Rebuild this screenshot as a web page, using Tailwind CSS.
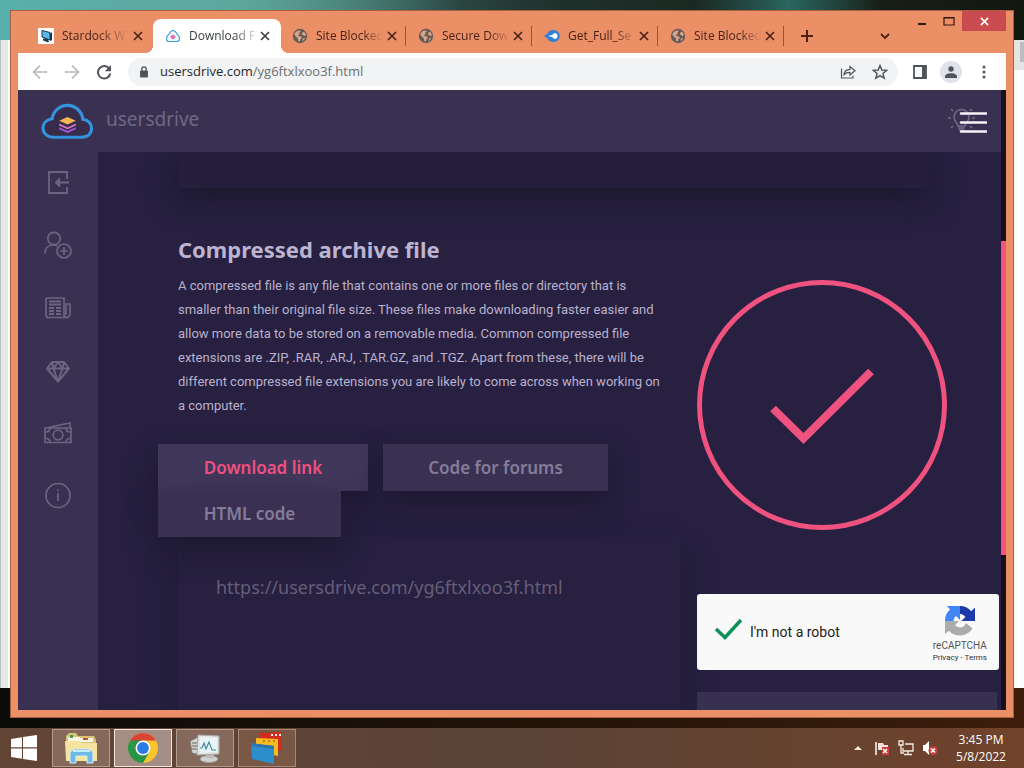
<!DOCTYPE html>
<html lang="en">
<head>
<meta charset="utf-8">
<meta name="viewport" content="width=device-width, initial-scale=1">
<title>Download File</title>
<script src="https://cdn.jsdelivr.net/npm/@tailwindcss/browser@4"></script>
</head>
<body class="h-screen overflow-hidden bg-[#1c0d04] font-['Noto_Sans','Open_Sans',sans-serif]">
<svg class="hidden" aria-hidden="true">
  <symbol id="globe" viewBox="0 0 16 16"><circle cx="8" cy="8" r="7.2" fill="#665c57"/><path d="M2.2 6.500c1-2.600 3-3.900 5.500-4.200l1 1.300-1.600 1.300.4 1.500-2 .9 1.800.9 1.900.3.6 1.600-1.600 1.400-.5 2.300-1.600-1-.3-2.500-1.700-1.500zM10.500 4.200l1.700-.5 1.700 2.700-.9 1.900-1.900-1.200-1.300-.3zM11 10.500l2-.8-.9 2.300-1.700 1z" fill="#d9a489"/></symbol>
  <symbol id="close" viewBox="0 0 10 10"><path d="M1 1l8 8M9 1L1 9" stroke="currentColor" stroke-width="1.700" fill="none"/></symbol>
</svg>
<div class="flex h-full flex-col">
  <!-- Desktop with the windows behind the browser -->
  <div class="relative min-h-0 flex-1 overflow-hidden bg-linear-to-r from-[#0b0c07] via-[#211208] to-[#3d1e0b]">
    <div class="absolute inset-x-0 top-0 h-10 bg-linear-to-r from-[#62b3ad] via-[#1f302b] via-55% to-[#14170e]"></div>
    <div class="absolute top-0 left-0 h-10 w-[45%] bg-linear-to-r from-[#58afab] via-[#5ea89e] to-[#2f5853]/0"></div>
    <div class="absolute top-0 left-[68%] h-3 w-[18%] bg-linear-to-r from-transparent via-[#2a6660] to-transparent"></div>
    <div class="absolute inset-x-0 top-10 bottom-10 border-l border-[#b9bdcc] bg-[#e6e9df]"></div>
    <div class="absolute top-10 bottom-10 left-2 w-1 bg-white"></div>
    <div class="absolute top-10 right-0 bottom-10 w-3 bg-white">
      <div class="h-[30px] bg-[#e4e4e4] pt-0.5 pl-2"><div class="h-5 bg-[#bdbdbd]"></div></div>
    </div>

    <!-- Browser window -->
    <section class="absolute inset-[10px] flex flex-col border border-[#a85f42] bg-[#eb8f67] px-[7px] pb-[7px]">
      <div class="relative flex h-[42px] shrink-0 items-end pl-[9px] font-['Open_Sans'] text-[12px] text-[#4b2216]">
        <div class="flex h-[34px] w-[126px] shrink-0 items-center pl-[11px]">
          <svg class="h-4 w-4 shrink-0 bg-white" viewBox="0 0 16 16"><path d="M4 2.500l8 2v7.500l-8-3z" fill="#5bb8ea" stroke="#17344a"/><path d="M12 5l2-.5v7.500l-2 1z" fill="#17344a"/><path d="M7 10.500l3 1v1.500l-5-1.500zM5 12l5 2 1-1" fill="#27465c" stroke="#17344a" stroke-width=".8"/></svg>
          <span class="ml-2 w-[71px] overflow-hidden whitespace-nowrap mask-r-from-50% mask-r-to-95%">Stardock W</span>
          <button class="grid h-4 w-[10px] place-items-center" aria-label="Close Stardock tab"><svg class="h-[10px] w-[10px]"><use href="#close"/></svg></button>
        </div>
        <div class="relative flex h-[34px] w-[128px] shrink-0 items-center rounded-t-lg bg-white pl-[12px] text-[#3c4043]">
          <span class="absolute bottom-0 -left-2 h-2 w-2 bg-[radial-gradient(circle_at_0_0,transparent_8px,white_8px)]"></span>
          <span class="absolute -right-2 bottom-0 h-2 w-2 bg-[radial-gradient(circle_at_100%_0,transparent_8px,white_8px)]"></span>
          <svg class="h-4 w-4 shrink-0" viewBox="0 0 16 16"><path d="M4 13.500h8c2.500 0 3-2.500 2-5-.6-1.500-1.300-1.500-2-2.500-1-2-2-3.500-4-3.500S5 4 4 6C3.300 7 2.600 7 2 8.500c-1 2.500-.5 5 2 5z" fill="#f4f8ff" stroke="#3b9bdd" stroke-width="1.200"/><path d="M8 6.500l2.500 1.500v2L8 11.500 5.500 10V8z" fill="#d678b8"/></svg>
          <span class="ml-2 w-[71px] overflow-hidden whitespace-nowrap mask-r-from-65% mask-r-to-98%">Download F</span>
          <button class="grid h-4 w-[10px] place-items-center" aria-label="Close Download tab"><svg class="h-[10px] w-[10px]"><use href="#close"/></svg></button>
        </div>
        <div class="flex h-[34px] w-[125px] shrink-0 items-center pl-[11px]">
          <svg class="h-4 w-4 shrink-0"><use href="#globe"/></svg>
          <span class="ml-2 w-[71px] overflow-hidden whitespace-nowrap mask-r-from-65% mask-r-to-95%">Site Blocked</span>
          <button class="grid h-4 w-[10px] place-items-center" aria-label="Close Site Blocked tab"><svg class="h-[10px] w-[10px]"><use href="#close"/></svg></button>
          <i class="ml-2 h-5 w-px bg-[#8f5640]"></i>
        </div>
        <div class="flex h-[34px] w-[126px] shrink-0 items-center pl-[12px]">
          <svg class="h-4 w-4 shrink-0"><use href="#globe"/></svg>
          <span class="ml-2 w-[71px] overflow-hidden whitespace-nowrap mask-r-from-65% mask-r-to-95%">Secure Dow</span>
          <button class="grid h-4 w-[10px] place-items-center" aria-label="Close Secure Download tab"><svg class="h-[10px] w-[10px]"><use href="#close"/></svg></button>
          <i class="ml-2 h-5 w-px bg-[#8f5640]"></i>
        </div>
        <div class="flex h-[34px] w-[126px] shrink-0 items-center pl-[12px]">
          <svg class="h-4 w-4 shrink-0" viewBox="0 0 16 16"><path d="M0 8l3.500-2.500C5 2 8.500 1.500 11 2.200c3 .8 4.800 3 4.700 5.800-.1 3-2 5.300-4.900 5.900C8 14.500 5 13.500 3.500 10.500z" fill="#2f80d8"/><path d="M4 8l4-1L10.500 5c2 0 3 1.200 3 3s-1 3-3 3L8 9z" fill="#fff"/></svg>
          <span class="ml-2 w-[71px] overflow-hidden whitespace-nowrap mask-r-from-65% mask-r-to-95%">Get_Full_Se</span>
          <button class="grid h-4 w-[10px] place-items-center" aria-label="Close Get Full Setup tab"><svg class="h-[10px] w-[10px]"><use href="#close"/></svg></button>
          <i class="ml-2 h-5 w-px bg-[#8f5640]"></i>
        </div>
        <div class="flex h-[34px] w-[126px] shrink-0 items-center pl-[12px]">
          <svg class="h-4 w-4 shrink-0"><use href="#globe"/></svg>
          <span class="ml-2 w-[71px] overflow-hidden whitespace-nowrap mask-r-from-65% mask-r-to-95%">Site Blocked</span>
          <button class="grid h-4 w-[10px] place-items-center" aria-label="Close second Site Blocked tab"><svg class="h-[10px] w-[10px]"><use href="#close"/></svg></button>
          <i class="ml-2 h-5 w-px bg-[#8f5640]"></i>
        </div>
        <button class="grid h-[34px] w-[46px] place-items-center" aria-label="New tab"><svg class="h-3 w-3" viewBox="0 0 12 12"><path d="M6 0v12M0 6h12" stroke="currentColor" stroke-width="2"/></svg></button>
        <button class="mr-[115px] ml-auto grid h-[34px] w-3 place-items-center" aria-label="Search tabs"><svg class="h-[10px] w-[10px]" viewBox="0 0 10 10"><path d="M1 3l4 4 4-4" fill="none" stroke="currentColor" stroke-width="1.800"/></svg></button>
        <div class="absolute top-0 right-0 flex h-5">
          <button class="grid w-7 place-items-center" aria-label="Minimize"><svg class="h-3 w-3" viewBox="0 0 12 12"><path d="M2 9h8" stroke="#32160d" stroke-width="2"/></svg></button>
          <button class="grid w-[26px] place-items-center" aria-label="Maximize"><svg class="h-3 w-3" viewBox="0 0 12 12"><path d="M1 2.500h10V10H1zM1 3h10" fill="none" stroke="#32160d" stroke-width="1.200"/></svg></button>
          <button class="grid w-11 place-items-center bg-[#ca4c50] text-white" aria-label="Close window"><svg class="h-[9px] w-[9px]"><use href="#close"/></svg></button>
        </div>
      </div>

      <div class="flex h-[37px] shrink-0 items-center bg-white text-[#50545a]">
        <div class="flex w-[110px] items-center gap-4 pl-[14px]">
          <button aria-label="Back"><svg class="block h-4 w-4" viewBox="0 0 16 16" fill="none" stroke="#b3b5b8" stroke-width="1.600"><path d="M15 8H2M8 1.500L1.500 8 8 14.500"/></svg></button>
          <button aria-label="Forward"><svg class="block h-4 w-4" viewBox="0 0 16 16" fill="none" stroke="#b3b5b8" stroke-width="1.600"><path d="M1 8h13M8 1.500L14.500 8 8 14.500"/></svg></button>
          <button aria-label="Reload"><svg class="block h-4 w-4" viewBox="0 0 16 16"><path d="M13.200 4.600A6.200 6.200 0 1 0 14.300 9.500" fill="none" stroke="currentColor" stroke-width="2"/><path d="M15 1v6.200H8.800z" fill="currentColor"/></svg></button>
        </div>
        <div class="flex h-7 min-w-0 flex-1 items-center rounded-full bg-[#f1f3f4] pr-[10px] pl-[11px]">
          <svg class="h-3 w-[10px] shrink-0" viewBox="0 0 10 12"><rect x="1" y="4.500" width="8" height="7" rx="1" fill="currentColor"/><path d="M2.800 5V3a2.200 2.200 0 0 1 4.400 0v2" fill="none" stroke="currentColor" stroke-width="1.300"/></svg>
          <a href="#" class="ml-[11px] flex-1 truncate font-['Open_Sans'] text-[13px] text-[#6b6f73]"><span class="text-[#24272b]">usersdrive.com</span>/yg6ftxlxoo3f.html</a>
          <button aria-label="Share"><svg class="block h-4 w-4" viewBox="0 0 16 16" fill="none" stroke="currentColor" stroke-width="1.200"><path d="M1.500 4.500v9.500h11.500v-2.500M4 10.500c.3-3.300 2.200-5 6-5.200V2.500l5 4.300-5 4.200V8.300c-2.800 0-4.500.6-6 2.200z"/></svg></button>
          <button class="ml-4" aria-label="Bookmark"><svg class="block h-4 w-4" viewBox="0 0 16 16"><path d="M8 1.500l1.800 4.500 4.900.3-3.800 3.100 1.300 4.800L8 11.600l-4.200 2.600 1.300-4.800L1.300 6.300 6.200 6z" fill="none" stroke="currentColor" stroke-width="1.400"/></svg></button>
        </div>
        <button class="ml-[14px]" aria-label="Side panel"><svg class="block h-4 w-4" viewBox="0 0 16 16"><path d="M2 2h12v12H2z" fill="none" stroke="currentColor" stroke-width="1.800"/><path d="M10 2h4v12h-4z" fill="currentColor"/></svg></button>
        <button class="ml-3 grid h-[22px] w-[22px] place-items-center rounded-full bg-[#dfe1ec]" aria-label="Profile"><svg class="h-3 w-3" viewBox="0 0 12 12" fill="currentColor"><circle cx="6" cy="3" r="2.700"/><path d="M0 12V9.700C1 7.700 4 7.200 6 7.200s5 .5 6 2.500V12z"/></svg></button>
        <button class="mr-[14px] ml-[14px]" aria-label="Menu"><svg class="block h-4 w-4" viewBox="0 0 16 16" fill="currentColor"><circle cx="8" cy="3" r="1.500"/><circle cx="8" cy="8" r="1.500"/><circle cx="8" cy="13" r="1.500"/></svg></button>
      </div>

      <!-- Web page -->
      <div class="flex min-h-0 flex-1 bg-[#272040]">
        <div class="flex min-w-0 flex-1 flex-col">
          <header class="flex h-[62px] shrink-0 items-center bg-[#3a3152] pr-[14px] pl-[23px]">
            <a href="#" class="flex items-center gap-3 text-[19px] text-[#6f6884]">
              <svg class="h-[37px] w-[53px]" viewBox="0 0 54 37"><path d="M13 34.500h28.500C48 34.500 51.500 30.500 51.500 25.500c0-5-3.500-9-8.800-9.300C41.500 8 35 2 27 2S12.500 8 11.300 15.700C5.500 16.500 2 20.500 2 25.200 2 30.500 6.500 34.500 13 34.500z" fill="#372c4a" stroke="#3493de" stroke-width="3.200"/><path d="M18.500 17.700L27 14l8.500 3.700L27 21.500z" fill="#f3b653"/><path d="M18.500 20.500l8.500 4 8.500-4v2l-8.500 4-8.500-4z" fill="#d779ca"/><path d="M18.500 24.300l8.500 4 8.500-4v2l-8.500 4-8.500-4z" fill="#a455df"/></svg>
              <span class="pb-1 leading-6">usersdrive</span>
            </a>
            <button class="ml-auto" aria-label="Theme and menu">
              <svg class="block h-8 w-10" viewBox="0 0 40 32"><g fill="none" stroke="#716985" stroke-width="1.600"><path d="M11 21c0-3-4-4-4-9a7.500 7.500 0 0 1 15 0c0 5-4 6-4 9zM11 23h7M12 25h5M1 13h3M25 13h3M4 4l2 2M25 4l-2 2M4 23l2-2M25 23l-2-2"/></g><path d="M14 8.500h25M14 17.500h25M14 26.500h25" stroke="#f5f3f8" stroke-width="2.600" stroke-linecap="round"/></svg>
            </button>
          </header>
          <div class="flex min-h-0 flex-1">
            <nav class="flex w-20 shrink-0 flex-col items-center gap-[35px] bg-[#3a3152] pt-4 text-[#6c6482]">
              <a href="#" aria-label="Login"><svg class="block h-7 w-7" viewBox="0 0 28 28" fill="none" stroke="currentColor" stroke-width="1.800"><path d="M23 11V4H5v21h18v-6M25 14.500H12M16 10.500l-4 4 4 4"/><path d="M16 10v9l-5-4.500z" fill="currentColor" stroke="none"/></svg></a>
              <a href="#" aria-label="Register"><svg class="block h-7 w-7" viewBox="0 0 28 28" fill="none" stroke="currentColor" stroke-width="1.700"><circle cx="10" cy="7.500" r="6.200"/><path d="M1 22.500c0-5 3-8.500 8-8.500 2 0 3 .3 4 1"/><circle cx="20" cy="20" r="7"/><path d="M20 16v8M16 20h8"/></svg></a>
              <a href="#" aria-label="News"><svg class="block h-7 w-7" viewBox="0 0 28 28" fill="none" stroke="currentColor" stroke-width="1.700"><path d="M2 4h18v17c0 3 5 3 6 0V10h-4v11M2 4v17c0 1.500 1 2.500 2.500 2.500H24"/><path d="M5 7.500h12M5 10.500h12M5 14h5M12 14h5M5 17h5M12 17h5M5 20h5M12 20h5" stroke-width="2"/></svg></a>
              <a href="#" aria-label="Premium"><svg class="block h-7 w-7" viewBox="0 0 28 28" fill="none" stroke="currentColor" stroke-width="2" stroke-linejoin="round"><path d="M8 5h12l5 6.500-11 13-11-13zM3 11.500h22M8 5l1.500 6.500L14 24.500l4.500-13L20 5M9.500 11.500L14 5l4.500 6.500"/></svg></a>
              <a href="#" aria-label="Earn money"><svg class="block h-7 w-7" viewBox="0 0 28 28" fill="none" stroke="currentColor" stroke-width="1.700"><path d="M1 8h26v14.500H1zM4 7.500L26 3v5"/><circle cx="14" cy="15" r="4.800"/><path d="M2 12c2.500 0 4-1.500 4-4M26 12c-2.500 0-4-1.500-4-4M2 18.500c2.500 0 4 1.500 4 4M26 18.500c-2.500 0-4 1.500-4 4"/></svg></a>
              <a href="#" aria-label="About"><svg class="block h-7 w-7" viewBox="0 0 28 28" fill="none" stroke="currentColor" stroke-width="1.700"><circle cx="14" cy="12.500" r="12"/><path d="M14 10v8M14 6.500V8"/></svg></a>
            </nav>
            <main class="min-w-0 flex-1 overflow-hidden pl-20">
              <div class="mr-[73px] h-9 bg-[#251e3c] shadow-[0_10px_30px_#1b172e]"></div>
              <div class="grid grid-cols-[minmax(0,1fr)_304px]">
                <section class="pt-[47px]">
                  <h1 class="text-[22px] leading-7 font-bold whitespace-nowrap text-[#bcb4d0]">Compressed archive file</h1>
                  <p class="mt-[11px] font-['Roboto'] text-[13px] leading-6 whitespace-nowrap text-[#b9b1cd]">A compressed file is any file that contains one or more files or directory that is<br>smaller than their original file size. These files make downloading faster easier and<br>allow more data to be stored on a removable media. Common compressed file<br>extensions are .ZIP, .RAR, .ARJ, .TAR.GZ, and .TGZ. Apart from these, there will be<br>different compressed file extensions you are likely to come across when working on<br>a computer.</p>
                  <div class="relative mt-[26px] -ml-5 flex flex-wrap gap-x-[15px] text-[17px] font-semibold text-[#857c9b]">
                    <button class="h-[47px] w-[210px] bg-[#40375a] text-[#ef5080] shadow-[0_14px_28px_#1d1831]">Download link</button>
                    <button class="h-[47px] w-[225px] bg-[#3a3152] shadow-[0_14px_28px_#1d1831]">Code for forums</button>
                    <button class="h-[46px] w-[183px] bg-[#3a3152] shadow-[0_14px_28px_#1d1831]">HTML code</button>
                  </div>
                  <div class="mr-[17px] h-[180px] px-[38px] pt-[34px] shadow-[0_16px_24px_#1f1934]">
                    <input class="block w-full bg-transparent text-[18px] leading-8 text-[#655e78] outline-none" aria-label="Download link" readonly value="https://usersdrive.com/yg6ftxlxoo3f.html">
                  </div>
                </section>
                <aside class="pt-[92px] pr-[2px]">
                  <svg class="block h-[250px] w-[250px]" viewBox="0 0 250 250" fill="none" stroke="#f0527f" role="img" aria-label="File is ready"><circle cx="125" cy="125" r="122.500" stroke-width="5"/><path d="M76 128.500l30.500 30L174 91.500" stroke-width="8"/></svg>
                  <div class="mt-16 flex h-[76px] items-center rounded-[3px] bg-[#f9f9f9] pr-3 pl-[17px] font-['Roboto']">
                    <label class="flex items-center gap-[6px] text-[14px] text-[#222]">
                      <span class="grid h-[30px] w-[30px]">
                        <input type="checkbox" checked class="col-start-1 row-start-1 appearance-none">
                        <svg class="pointer-events-none col-start-1 row-start-1" viewBox="0 0 30 30"><path d="M2 12l9 8.500L27 3" fill="none" stroke="#0c9058" stroke-width="3.400"/></svg>
                      </span>I'm not a robot</label>
                    <div class="ml-auto flex flex-col items-center pt-1 text-[#555]">
                      <svg class="h-8 w-8" viewBox="0 0 32 32"><path d="M31 16V2.500l-3.700 3.700A15 15 0 0 0 16 1v8c2.300 0 4 1 5.400 3l-4 4z" fill="#1c3aa9"/><path d="M16 1H3l3 3.500A15 15 0 0 0 1 16h8.500c0-1.500.7-3.300 2.500-5l4 4z" fill="#4285f4"/><path d="M1 16v13l3.700-3.300A15 15 0 0 0 28.500 23.500L22 18c-1.500 3-3.500 4.500-6 4.500-2 0-3.500-1-5-2.500l4-4z" fill="#ababab"/></svg>
                      <span class="mt-[2px] text-[10px] leading-[14px]">reCAPTCHA</span>
                      <span class="text-[8px] leading-[10px] text-[#333]"><a href="#">Privacy</a> - <a href="#">Terms</a></span>
                    </div>
                  </div>
                  <div class="mt-[22px] mr-[2px] h-12 bg-[#383050]"></div>
                </aside>
              </div>
            </main>
          </div>
        </div>
        <!-- Page scrollbar -->
        <div class="w-[5px] shrink-0 bg-[#15121e] pt-[151px]"><div class="h-[314px] bg-[#f4517e]"></div></div>
      </div>
    </section>
  </div>

  <!-- Taskbar -->
  <footer class="flex h-10 shrink-0 items-center bg-linear-to-r from-[#634536] via-[#5a4336] to-[#70422a] text-white">
    <button class="ml-[10px] grid w-7 place-items-center" aria-label="Start"><svg class="h-7 w-7" viewBox="0 0 28 28" fill="#fff"><path d="M1 5l11-1.700v10H1zM13 3.100L27 1v12.300H13zM1 14.500h11v10.200L1 23zM13 14.500h14V27l-14-2.100z"/></svg></button>
    <div class="ml-[14px] flex gap-1">
      <button class="grid h-[38px] w-[58px] place-items-center border border-[#b39c8f] bg-[#84695b]" aria-label="File Explorer"><svg class="h-8 w-9" viewBox="0 0 36 32"><path d="M3 4l3-3h7l2 3h16l2 4v20H3z" fill="#dcc272"/><path d="M5 5h12v4H5zM17 6h13v4H17z" fill="#f6f4e4"/><path d="M7 3h3v3H7z" fill="#4b9752"/><path d="M20 6h5v2h-5z" fill="#b5523b"/><path d="M2 9h14l3 2h15v18H3z" fill="#f5e49d"/><path d="M7 31V20l4-3h15l4 3v11h-6v-7H13v7z" fill="#70b9e5" stroke="#d9eef8"/><path d="M10 19h17" stroke="#c9ecfb" stroke-width="2"/></svg></button>
      <button class="grid h-[38px] w-[58px] place-items-center border border-[#f2e6df] bg-[#a38d84]" aria-label="Chrome"><svg class="h-8 w-8" viewBox="0 0 32 32"><circle cx="16" cy="16" r="15" fill="#f8c62c"/><path d="M16 16L3 8.500A15 15 0 0 1 29 8.500H16z" fill="#d94434"/><path d="M3 8.500A15 15 0 0 0 16 31l6.500-11.300L9.500 19.500z" fill="#289449"/><path d="M3 8.500l6.500 11L16 16V8.500z" fill="#289449"/><circle cx="16" cy="16" r="7.500" fill="#fff"/><circle cx="16" cy="16" r="5.900" fill="#2c7be5"/></svg></button>
      <button class="grid h-[38px] w-[58px] place-items-center border border-[#b39c8f] bg-[#84695b]" aria-label="Task Manager"><svg class="h-8 w-8" viewBox="0 0 32 32"><path d="M1 9l8-4 2 18-8-2z" fill="#d4d5d2" stroke="#777"/><path d="M3 11h6M3 14h6M3 17h6" stroke="#666"/><ellipse cx="20" cy="27" rx="9" ry="3.500" fill="#d3d1cf" stroke="#999"/><path d="M17 22h8v4h-8z" fill="#bbb"/><path d="M9 3l21 1v18l-22 1z" fill="#e4e4e2" stroke="#aaa"/><path d="M11 5l17 1v14l-17 1z" fill="#e8f5f8"/><path d="M11 16h2l2-5 2 6 3-7 3 8h4" fill="none" stroke="#4b8a99" stroke-width="1.200"/></svg></button>
      <button class="grid h-[38px] w-[58px] place-items-center border border-[#a78777] bg-[#785744]" aria-label="Window manager"><svg class="h-8 w-8" viewBox="0 0 32 32"><path d="M9 1l22-1v18l-5 1V9L9 7z" fill="#d12b1c"/><path d="M20 2h2v2h-2zM24 2h2v2h-2zM28 2h2v2h-2z" fill="#eee"/><path d="M5 6l22 1v17l-5-1V14L5 13z" fill="#f6bb22"/><path d="M12 8h2v2h-2zM17 8h2v2h-2zM22 8h2v2h-2z" fill="#d67618"/><path d="M0 11l23 3v18L1 27z" fill="#2d8ecc"/><path d="M0 11l23 3v3L0 14z" fill="#2c75ad"/></svg></button>
    </div>
    <div class="ml-auto flex items-center gap-2">
      <button aria-label="Show hidden icons"><svg class="block h-2 w-2" viewBox="0 0 8 8"><path d="M0 6l4-4 4 4z" fill="#f6e7dd"/></svg></button>
      <svg class="ml-1 h-4 w-4" viewBox="0 0 16 16"><path d="M2 2v13" stroke="#fff" stroke-width="1.500"/><path d="M4 3h5l1 2h4v5H4z" fill="#f7dfdb"/><path d="M8 7h7v8H8z" fill="#c93e3b"/><path d="M9 9l4 4M13 9l-4 4" stroke="#fff" stroke-width="1.600"/></svg>
      <svg class="h-4 w-4" viewBox="0 0 16 16" fill="none" stroke="#f8ece4" stroke-width="1.300"><path d="M7 4h8v7H5V8M10 11v3M6 14.500h8M1 1h4v4H1zM3 5v8h3"/></svg>
      <svg class="h-4 w-4" viewBox="0 0 16 16"><path d="M1 5h2l4-4v14l-4-4H1z" fill="#fff"/><circle cx="11" cy="10.500" r="4.500" fill="#c93e3b"/><path d="M9 8.500l4 4M13 8.500l-4 4" stroke="#fff" stroke-width="1.600"/></svg>
      <time class="mr-[14px] ml-[6px] w-[58px] text-center font-['Open_Sans'] text-[12px] leading-[17px] whitespace-nowrap">3:45 PM<br>5/8/2022</time>
    </div>
  </footer>
</div>
</body>
</html>
